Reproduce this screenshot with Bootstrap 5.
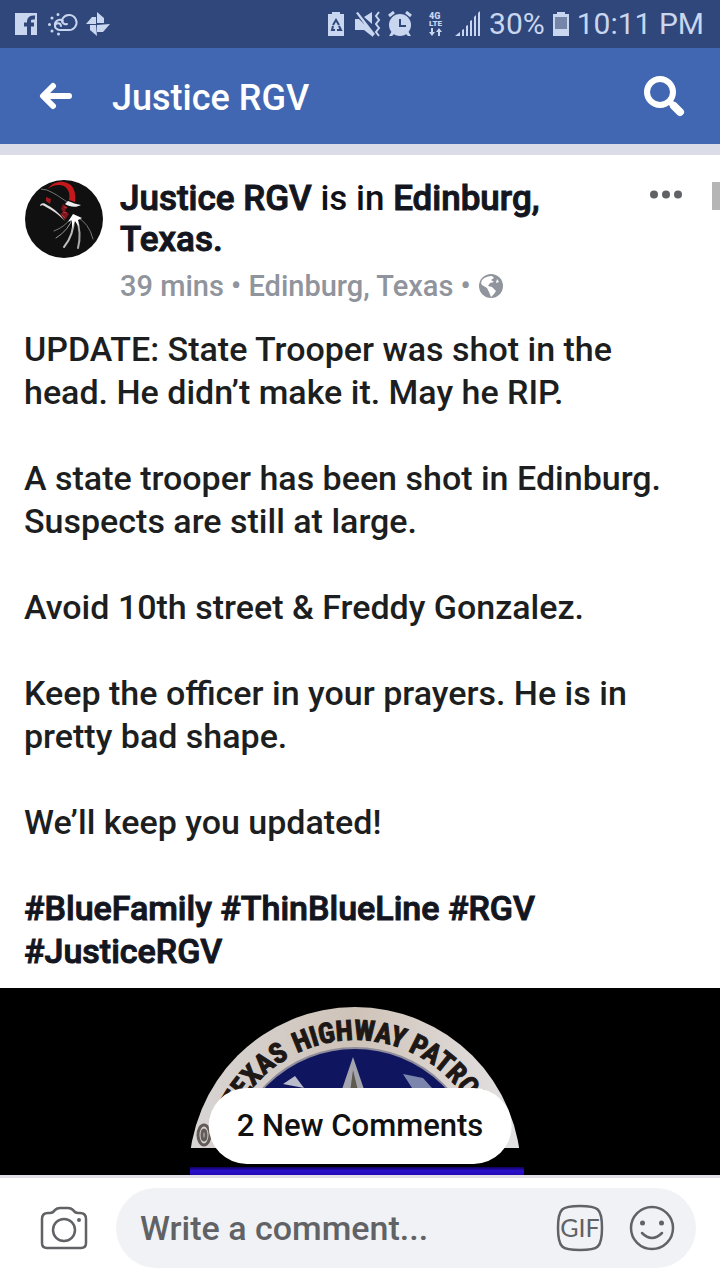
<!DOCTYPE html>
<html lang="en">
<head>
<meta charset="utf-8">
<meta name="viewport" content="width=device-width, initial-scale=1">
<title>Justice RGV</title>
<link href="https://cdn.jsdelivr.net/npm/bootstrap@5.3.0/dist/css/bootstrap.min.css" rel="stylesheet">
<style>
  body { font-family: Roboto, "Noto Sans", sans-serif; font-weight: 500; color: #1c1e20; background: #fff; }
  svg { display: block; flex-shrink: 0; }
  .status-bar { height: 48px; background: #2f477a; color: #c9d6ef; font-size: 30px; line-height: 48px; font-weight: 400; padding: 0 16px 0 14px; }
  .top-bar { height: 96px; background: #4267b2; padding: 0 35px 0 38px; }
  .top-title { font-size: 36px; line-height: 48px; font-weight: 500; padding: 3px 0 0 38px; }
  .feed-gap { height: 11px; background: #dadde7; }
  .plain-btn { background: none; border: 0; padding: 0; }
  .post-head { padding: 23px 36px 0 24px; gap: 16px; }
  .post-name { font-size: 35px; line-height: 41px; color: #101018; font-weight: 500; }
  .heavy { color: #14161f; text-decoration: none; -webkit-text-stroke: 1px #14161f; }
  .post-meta { font-size: 29px; line-height: 36px; color: #90949c; padding-top: 8px; gap: 8px; }
  .post-text { font-size: 34px; line-height: 43px; padding: 24px 40px 15px 24px; }
  .post-text p { margin: 0 0 43px; }
  .post-text p:last-child { margin: 0; }
  .scroll-thumb { top: 27px; right: 0; width: 8px; height: 28px; background: #b5b5b5; }
  .photo { background: #000; }
  .photo svg { width: 100%; height: auto; }
  .new-comments { bottom: 11px; left: 50%; transform: translateX(-50%); height: 76px; padding: 0 28px; border: 0; background: #fff; color: #111; font-size: 31px; font-weight: 500; white-space: nowrap; }
  .composer { border-top: 3px solid #e2e0e6; padding: 10px 24px 12px 40px; gap: 28px; }
  .field { height: 80px; background: #f1f2f5; padding: 0 20px 0 24px; min-width: 0; }
  .field input { border: 0; background: none; font-size: 34px; font-weight: 500; color: #606266; outline: 0; padding: 0; width: 0; min-width: 0; }
  .field input::placeholder { color: #606266; opacity: 1; }
</style>
</head>
<body>
<div class="d-flex align-items-center status-bar">
  <svg width="96" height="24" viewBox="0 0 96 24" aria-hidden="true">
    <path fill="#c9d6ef" d="M1 1h22v22H1z"/>
    <path fill="none" stroke="#2f477a" stroke-width="4" d="M15 23V9q0-4 6-3.500M10 12.500h10"/>
    <g fill="none" stroke="#c9d6ef" stroke-width="2" stroke-linecap="round">
      <path d="M41 14a5 5 0 0 1 8-5M47 14a3 3 0 1 0-4 3q1 1 3 1h9a7.500 7.500 0 1 0-6-12q-2 3 0 5 2 2 4 1"/>
      <path stroke-width="3" d="M44 2.500v.1M38 6v.1M35.500 12.500v.1M38 19v.1M44.500 22v.1"/>
    </g>
    <path fill="#c9d6ef" d="M83 0l7 6v5h-7zM96 12l-7 8h-6v-7zM83 24l-7-6v-5h6zM72 12l6-7h4v7z"/>
  </svg>
  <div class="d-flex align-items-center ms-auto gap-2">
    <svg width="153" height="26" viewBox="0 0 153 26" aria-hidden="true">
      <g fill="#c9d6ef">
        <path d="M0 3h4V1h8v2h4v22H0z"/>
        <path d="M27 8h4l14 14v4l-9-7h-9zM28 2l2-1 17 22-2 2zM36 6l8-5v12z"/>
        <circle cx="72" cy="14" r="11"/>
        <path d="M64 20l3 2-3 3h-3zM80 20l-3 2 3 3h3z"/>
      </g>
      <g fill="none" stroke="#2f477a" stroke-width="2">
        <path d="M5 14l3-5 3 5M11 15l2 4H9M7 19H4l1-4"/>
        <path d="M72 8v7h6"/>
      </g>
      <path fill="none" stroke="#c9d6ef" stroke-width="2" d="M51 1l-3 4 3 4-3 4 3 4-3 4 3 4"/>
      <path fill="none" stroke="#c9d6ef" stroke-width="3" d="M61 5l5-4M78 1l5 4"/>
      <g fill="#c9d6ef" font-family="Roboto, sans-serif" font-weight="900" font-size="9">
        <text x="101" y="8">4G</text><text x="101" y="15" font-size="8">LTE</text>
      </g>
      <path fill="#c9d6ef" d="M103 17h2v4h2l-3 4-3-4h2zM110 25h2v-4h2l-3-4-3 4h2z"/>
      <path fill="#c9d6ef" d="M127 25l5-4v4zM134 25v-6l2-1v7zM138 25V15l2-1v11zM142 25V10l2-1v16zM146 25V6l2-2v21zM150 25V2l2-2v25z"/>
    </svg>
    <span>30%</span>
    <svg width="16" height="24" viewBox="0 0 16 24" aria-hidden="true"><path fill="#c9d6ef" d="M0 2h4V0h8v2h4v22H0z"/><path fill="#7686a8" d="M2 5h12v12H2z"/></svg>
    <span>10:11 PM</span>
  </div>
</div>

<header class="d-flex align-items-center top-bar text-white">
  <button class="plain-btn" type="button" aria-label="Back">
    <svg width="36" height="28" viewBox="0 0 36 28" fill="none" stroke="#fff" stroke-width="6" stroke-linecap="round" stroke-linejoin="round"><path d="M15 4L5 14l10 10M6 14h25"/></svg>
  </button>
  <h1 class="top-title mb-0">Justice RGV</h1>
  <button class="plain-btn ms-auto" type="button" aria-label="Search">
    <svg width="42" height="42" viewBox="0 0 42 42" fill="none" stroke="#fff" stroke-linecap="round"><circle cx="17" cy="17" r="13" stroke-width="6"/><path stroke-width="6" d="M27 27l3 3"/><path stroke-width="8" d="M31 31l6 6"/></svg>
  </button>
</header>
<div class="feed-gap"></div>

<main>
  <article class="position-relative">
    <div class="position-absolute scroll-thumb"></div>
    <div class="d-flex align-items-start post-head">
      <svg width="80" height="80" viewBox="0 -2 80 80" role="img" aria-label="Justice RGV profile picture">
        <circle cx="40" cy="39" r="39" fill="#101010"/>
        <path d="M24 9C30-1 45 0 49 8q3 5 2 14l-6-2c2-9-3-15-10-15-5 0-9 2-11 4z" fill="#c4181c"/>
        <path d="M22 17l5 2-1 5-4-3z" fill="#a51a20"/>
        <path d="M17 9c3 1 5 0 8 2 9 4 13 8 20 12" fill="none" stroke="#777" stroke-width="1"/>
        <path d="M44 21c5 2 8 3 13 4-5 3-11 2-16-1z" fill="#eee"/>
        <path d="M39 24l4 3-2 4 4 3-4 6-5-6 3-2-2-3z" fill="#7c161c"/>
        <path d="M40 27l3 1M39 32l4 1M38 35l3 3" stroke="#c23038" stroke-width="1"/>
        <path d="M16 26c0-3 4-4 7-1 8 4 13 9 18 16-7-7-13-11-19-14-3-2-4-2-6-1z" fill="#ddd"/>
        <g fill="none" stroke-linecap="round">
          <path d="M48 37q-7 10-18 14" stroke="#777" stroke-width="1"/>
          <path d="M49 37q-4 13-17 21" stroke="#999" stroke-width="1"/>
          <path d="M50 37q0 18-10 30" stroke="#bbb" stroke-width="2"/>
          <path d="M52 37q6 16 2 31" stroke="#aaa" stroke-width="2"/>
          <path d="M53 37q12 6 16 22" stroke="#777" stroke-width="1"/>
        </g>
        <path d="M44 42l5-8 9 4-4 2 1 7-4-6-3 7v-8z" fill="#fff"/>
      </svg>
      <div class="flex-grow-1">
        <h2 class="post-name mb-0"><a class="heavy" href="#">Justice RGV</a> is in <a class="heavy" href="#"><span>Edinburg,</span> <span>Texas.</span></a></h2>
        <div class="d-flex align-items-center post-meta">
          <span>39 mins • Edinburg, Texas •</span>
          <svg width="24" height="24" viewBox="0 0 24 24" role="img" aria-label="Public"><circle cx="12" cy="12" r="12" fill="#90949c"/><path fill="#fff" d="M3 6c3-3 6-4 10-4l2 2-3 2 3 2-4 1-2 3 4 1 4 4-2 3-3 3-2-5-2-4-5-3-1-2zM18 5l2 3-3 1z"/></svg>
        </div>
      </div>
      <button class="plain-btn mt-2 pt-1" type="button" aria-label="Post options">
        <svg width="36" height="9" viewBox="0 0 36 9" fill="#606266"><circle cx="6" cy="4.500" r="4"/><circle cx="18" cy="4.500" r="4"/><circle cx="30" cy="4.500" r="4"/></svg>
      </button>
    </div>
    <div class="post-text">
      <p>UPDATE: State Trooper was shot in the head. He didn’t make it. May he RIP.</p>
      <p>A state trooper has been shot in Edinburg. Suspects are still at large.</p>
      <p>Avoid 10th street &amp; Freddy Gonzalez.</p>
      <p>Keep the officer in your prayers. He is in pretty bad shape.</p>
      <p>We’ll keep you updated!</p>
      <p><a class="heavy" href="#">#BlueFamily</a> <a class="heavy" href="#">#ThinBlueLine</a> <a class="heavy" href="#">#RGV</a> <a class="heavy" href="#">#JusticeRGV</a></p>
    </div>
  </article>

  <section class="position-relative photo">
    <svg viewBox="0 0 720 187" role="img" aria-label="Texas Highway Patrol badge with a blue line">
      <defs>
        <clipPath id="seal"><path d="M0 0h720v160H0z"/></clipPath>
        <path id="arc" d="M222 185a133 133 0 0 1 266 0"/>
        <linearGradient id="rim"><stop offset="0" stop-color="#d8d5d5"/><stop offset=".5" stop-color="#cfc3b8"/><stop offset="1" stop-color="#e4e2e4"/></linearGradient>
        <linearGradient id="line" x2="0" y2="1"><stop offset="0" stop-color="#10005a"/><stop offset=".5" stop-color="#2a10d0"/><stop offset="1" stop-color="#2408b0"/></linearGradient>
      </defs>
      <g clip-path="url(#seal)">
        <circle cx="355" cy="185" r="166" fill="url(#rim)"/>
        <circle cx="355" cy="185" r="125" fill="#10155f" stroke="#8f8d9b" stroke-width="2"/>
        <path d="M353 69l17 50h-34z" fill="#a5a5ae"/><path d="M353 82l9 37h-14z" fill="#5d5a50"/>
        <path d="M283 96l12-8 9 12z" fill="#b9bccb"/><path d="M403 86l20 4 9 10h-20z" fill="#7c86ad"/>
        <g fill="none" stroke="#625b57" stroke-width="3"><ellipse cx="204" cy="147" rx="6" ry="10"/><ellipse cx="204" cy="147" rx="2" ry="5"/></g>
      </g>
      <g fill="#1d1715" stroke="#1d1715" stroke-width="1" font-family="'Liberation Sans Narrow', 'Roboto Condensed', 'DejaVu Sans Condensed', sans-serif" font-weight="700" font-size="28">
        <text><textPath href="#arc" startOffset="64">TEXAS</textPath></text>
        <text><textPath href="#arc" startOffset="149">HIGHWAY</textPath></text>
        <text><textPath href="#arc" startOffset="263">PATROL</textPath></text>
      </g>
      <path fill="url(#line)" d="M190 179h334v8H190z"/>
    </svg>
    <button class="position-absolute rounded-pill new-comments" type="button">2 New Comments</button>
  </section>
</main>

<form class="d-flex align-items-center composer">
  <button class="plain-btn" type="button" aria-label="Add photo">
    <svg width="48" height="44" viewBox="0 0 48 44" fill="none" stroke="#606266" stroke-width="2.500"><path d="M8 7h2q3 0 5-3 2-2 5-2h8q3 0 5 2 2 3 5 3h2q6 0 6 6v24q0 5-5 5H7q-5 0-5-5V13q0-6 6-6z"/><circle cx="24" cy="24" r="11"/><circle cx="39" cy="14" r="2" fill="#606266" stroke="none"/></svg>
  </button>
  <div class="d-flex align-items-center flex-grow-1 rounded-pill field">
    <input class="flex-grow-1" type="text" aria-label="Write a comment" placeholder="Write a comment...">
    <button class="plain-btn" type="button" aria-label="Insert GIF">
      <svg width="48" height="48" viewBox="0 0 48 48"><path d="M24 2c18 0 22 2 22 22s-4 22-22 22S2 44 2 24 6 2 24 2z" fill="none" stroke="#606266" stroke-width="2.500"/><text x="24" y="33" text-anchor="middle" font-family="Lato, sans-serif" font-weight="400" font-size="25" fill="#606266">GIF</text></svg>
    </button>
    <button class="plain-btn ms-4" type="button" aria-label="Insert emoji">
      <svg width="48" height="48" viewBox="0 0 48 48" fill="none" stroke="#606266" stroke-width="2.500" stroke-linecap="round"><circle cx="24" cy="24" r="21"/><path d="M14 29q10 10 20 0"/><g fill="#606266" stroke="none"><circle cx="14.500" cy="19" r="2.500"/><circle cx="33.500" cy="19" r="2.500"/></g></svg>
    </button>
  </div>
</form>
<script src="https://cdn.jsdelivr.net/npm/bootstrap@5.3.0/dist/js/bootstrap.bundle.min.js"></script>
</body>
</html>
